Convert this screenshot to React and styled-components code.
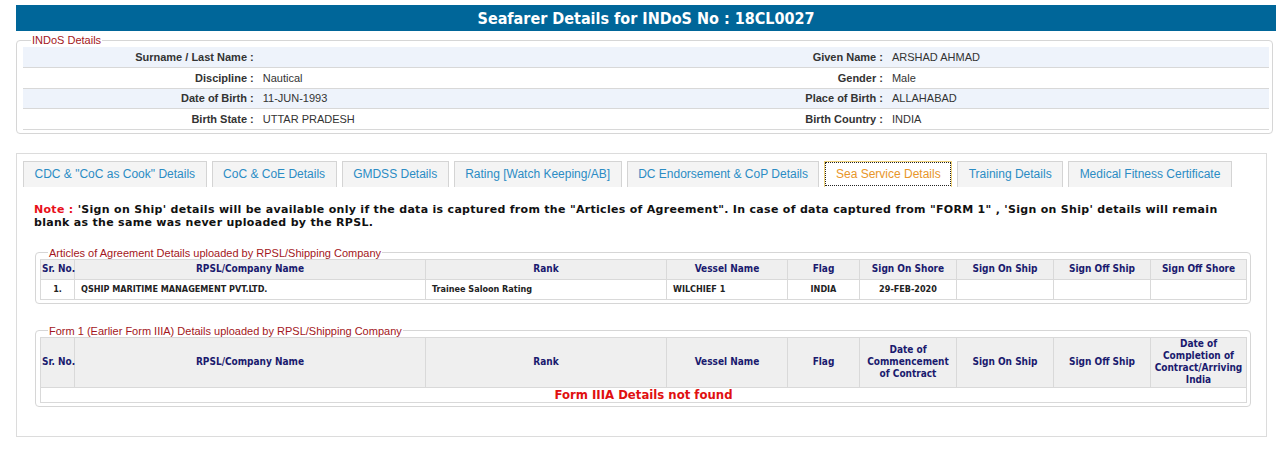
import React from 'react';
import styled, { createGlobalStyle } from 'styled-components';

const GlobalStyle = createGlobalStyle`
body {
  margin: 0;
  background: #ffffff;
  font-family: "Liberation Sans", Arial, sans-serif;
}
`;

const Page = styled.div`
padding: 5px 3px 0 16px;
`;

const TitleBar = styled.div`
height: 26px;
background: #006699;
color: #ffffff;
font-family: "DejaVu Sans Condensed", "DejaVu Sans", sans-serif;
font-weight: 700;
font-size: 16px;
display: flex;
align-items: center;
justify-content: center;
`;

const InfoSet = styled.fieldset`
margin: 3px 3px 0 0;
padding: 1px 3px 3px 6px;
border: 1px solid #d6d6d6;
border-radius: 4px;
`;

const Legend = styled.legend`
font-family: "Liberation Sans", Arial, sans-serif;
font-size: 11px;
color: #a31621;
padding: 0 1px;
margin-left: ${p => p.$indent || 8}px;
line-height: 12px;
`;

const InfoTable = styled.table`
width: 100%;
border-collapse: collapse;
font-size: 11px;
color: #333;
`;

const InfoRow = styled.tr`
background: ${p => (p.$alt ? '#eef3fb' : '#ffffff')};
height: 20.5px;
border-bottom: 1px solid #d8d8d8;
`;

const Label = styled.td`
text-align: right;
font-weight: 700;
color: #333;
padding: 0 6px 0 0;
white-space: nowrap;
width: ${p => p.$w};
`;

const Value = styled.td`
padding: 0 0 0 3px;
color: #333;
width: ${p => p.$w};
`;

const Panel = styled.div`
margin: 19px 9px 0 0;
border: 1px solid #dcdcdc;
padding: 7px 18px 29px 6px;
`;

const TabBar = styled.div`
display: flex;
gap: 5px;
`;

const Tab = styled.div`
height: 26px;
box-sizing: border-box;
display: flex;
align-items: center;
padding: 0 10.5px;
font-size: 12px;
white-space: nowrap;
color: ${p => (p.$active ? '#e8962a' : '#2b8cc4')};
background: ${p => (p.$active ? '#ffffff' : '#f4f4f4')};
border: 1px solid ${p => (p.$active ? '#f1d37a' : '#d4d4d4')};
border-bottom: none;
outline: ${p => (p.$active ? '1px dotted #222' : 'none')};
outline-offset: -2px;
`;

const Note = styled.div`
margin: 16px 0 0 11px;
max-width: 1195px;
font-family: "DejaVu Sans", sans-serif;
font-weight: 700;
font-size: 11px;
letter-spacing: 0.3px;
line-height: 13px;
color: #111;
`;

const Red = styled.span`
color: #e8101a;
`;

const GridSet = styled.fieldset`
margin: ${p => p.$top}px 0 0 12px;
padding: 0 3px 3px 4px;
border: 1px solid #d6d6d6;
border-radius: 4px;
`;

const Grid = styled.table`
width: 100%;
border-collapse: collapse;
table-layout: fixed;
font-family: "DejaVu Sans Condensed", "DejaVu Sans", sans-serif;
border: 1px solid #d9d9d9;
`;

const Th = styled.th`
background: #efefef;
color: #1a1a6e;
font-size: 10px;
font-weight: 700;
line-height: 12px;
border: 1px solid #d9d9d9;
padding: 0 1px;
white-space: ${p => (p.$nowrap ? 'nowrap' : 'normal')};
height: ${p => p.$h || 19}px;
`;

const Td = styled.td`
font-size: 9px;
font-weight: 700;
color: #222;
height: 19px;
border: 1px solid #d9d9d9;
padding: 0 6px;
text-align: ${p => (p.$center ? 'center' : 'left')};
`;

const Empty = styled.td`
text-align: center;
color: #e01010;
font-size: 13px;
font-weight: 700;
height: 14px;
line-height: 14px;
padding: 0;
`;

const cols = [34, 351, 241, 121, 72, 97, 97, 97, 96];

const tabs = [
  'CDC & "CoC as Cook" Details',
  'CoC & CoE Details',
  'GMDSS Details',
  'Rating [Watch Keeping/AB]',
  'DC Endorsement & CoP Details',
  'Sea Service Details',
  'Training Details',
  'Medical Fitness Certificate',
];

const info = [
  ['Surname / Last Name :', '', 'Given Name :', 'ARSHAD AHMAD'],
  ['Discipline :', 'Nautical', 'Gender :', 'Male'],
  ['Date of Birth :', '11-JUN-1993', 'Place of Birth :', 'ALLAHABAD'],
  ['Birth State :', 'UTTAR PRADESH', 'Birth Country :', 'INDIA'],
];

const ColGroup = () => (
  <colgroup>
    {cols.map((w, i) => <col key={i} style={{ width: w }} />)}
  </colgroup>
);

const App = () => (
  <Page>
    <GlobalStyle />
    <TitleBar>Seafarer Details for INDoS No : 18CL0027</TitleBar>
    <InfoSet>
      <Legend $indent={8}>INDoS Details</Legend>
      <InfoTable>
        <tbody>
          {info.map((r, i) => (
            <InfoRow key={i} $alt={i % 2 === 0}>
              <Label $w="19%">{r[0]}</Label>
              <Value $w="31%">{r[1]}</Value>
              <Label $w="19.5%">{r[2]}</Label>
              <Value $w="30.5%">{r[3]}</Value>
            </InfoRow>
          ))}
        </tbody>
      </InfoTable>
    </InfoSet>

    <Panel>
      <TabBar>
        {tabs.map(t => (
          <Tab key={t} $active={t === 'Sea Service Details'}>{t}</Tab>
        ))}
      </TabBar>

      <Note>
        <Red>Note :</Red>{' '}'Sign on Ship' details will be available only if the data is captured from the "Articles of Agreement". In case of data captured from "FORM 1" , 'Sign on Ship' details will remain blank as the same was never uploaded by the RPSL.
      </Note>

      <GridSet $top={18}>
        <Legend $indent={8}>Articles of Agreement Details uploaded by RPSL/Shipping Company</Legend>
        <Grid>
          <ColGroup />
          <thead>
            <tr>
              <Th $nowrap>Sr. No.</Th>
              <Th>RPSL/Company Name</Th>
              <Th>Rank</Th>
              <Th>Vessel Name</Th>
              <Th>Flag</Th>
              <Th>Sign On Shore</Th>
              <Th>Sign On Ship</Th>
              <Th>Sign Off Ship</Th>
              <Th>Sign Off Shore</Th>
            </tr>
          </thead>
          <tbody>
            <tr>
              <Td $center>1.</Td>
              <Td>QSHIP MARITIME MANAGEMENT PVT.LTD.</Td>
              <Td>Trainee Saloon Rating</Td>
              <Td>WILCHIEF 1</Td>
              <Td $center>INDIA</Td>
              <Td $center>29-FEB-2020</Td>
              <Td />
              <Td />
              <Td />
            </tr>
          </tbody>
        </Grid>
      </GridSet>

      <GridSet $top={21}>
        <Legend $indent={8}>Form 1 (Earlier Form IIIA) Details uploaded by RPSL/Shipping Company</Legend>
        <Grid>
          <ColGroup />
          <thead>
            <tr>
              <Th $h={49} $nowrap>Sr. No.</Th>
              <Th $h={49}>RPSL/Company Name</Th>
              <Th $h={49}>Rank</Th>
              <Th $h={49}>Vessel Name</Th>
              <Th $h={49}>Flag</Th>
              <Th $h={49}>Date of Commencement of Contract</Th>
              <Th $h={49}>Sign On Ship</Th>
              <Th $h={49}>Sign Off Ship</Th>
              <Th $h={49}>Date of Completion of Contract/Arriving India</Th>
            </tr>
          </thead>
          <tbody>
            <tr>
              <Empty colSpan={9}>Form IIIA Details not found</Empty>
            </tr>
          </tbody>
        </Grid>
      </GridSet>
    </Panel>
  </Page>
);

export default App;
